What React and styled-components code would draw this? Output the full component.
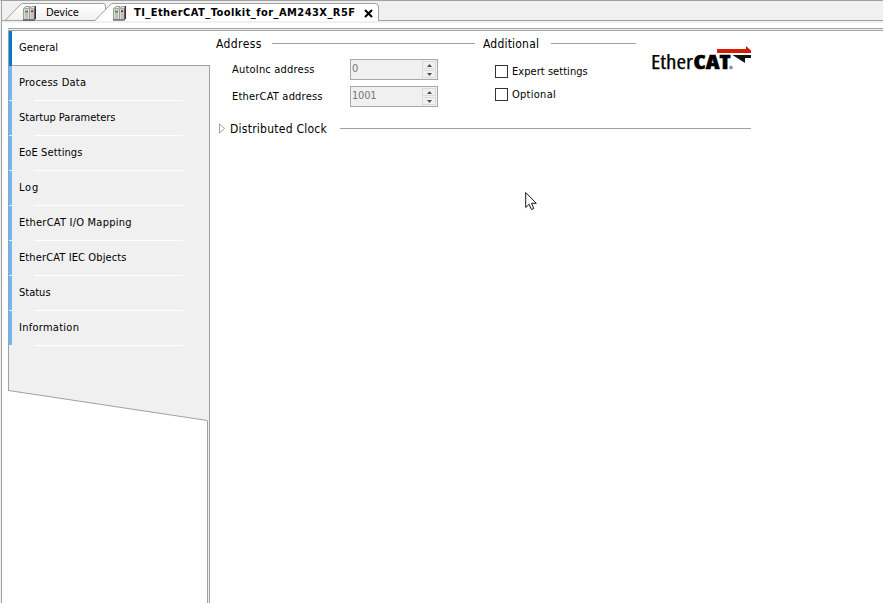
import React from "react";
import styled, { createGlobalStyle, css } from "styled-components";

const GlobalStyle = createGlobalStyle`
  *, *::before, *::after { box-sizing: border-box; }
  body {
    margin: 0;
    background: #fff;
    color: #000;
    font: 11px/14px "DejaVu Sans Condensed", "DejaVu Sans", sans-serif;
    font-stretch: condensed;
    overflow: hidden;
  }
`;

const Window = styled.div`
  width: 883px;
  height: 603px;
  display: flex;
  flex-direction: column;
  border-top: 1px solid #a0a0a0;
  border-left: 1px solid #f0f0f0;
  background: #fff;
`;

const TabBar = styled.header`
  height: 22px;
  display: flex;
  border-left: 1px solid #a0a0a0;
  background: linear-gradient(#f0f0f0 19px, #a0a0a0 19px, #a0a0a0 20px, #f0f0f0 20px);
`;

const Tab = styled.div`
  position: relative;
  width: ${(p) => p.$width}px;
  height: 22px;
  margin-left: ${(p) => p.$offset}px;
  padding: 4px 0 0 ${(p) => p.$pad}px;
  display: flex;
  align-items: flex-start;
  font-weight: ${(p) => (p.$active ? 700 : 400)};
`;

const TabShape = styled.svg`
  position: absolute;
  left: 0;
  top: 0;
`;

const DeviceIcon = styled.svg`
  position: relative;
  flex: none;
  width: 14px;
  height: 16px;
  margin-right: ${(p) => p.$gap}px;
`;

const Text = styled.span`
  position: relative;
  display: block;
  flex: none;
  white-space: nowrap;
  letter-spacing: ${(p) => p.$track || 0}px;
`;

const TabLabel = styled(Text)`
  margin-top: 1px;
`;

const CloseIcon = styled.svg`
  position: relative;
  flex: none;
  margin: 4px 0 0 9px;
`;

const Body = styled.div`
  flex: 1;
  min-height: 0;
  display: flex;
  padding: 5px 0 0 6px;
  border-left: 1px solid #a0a0a0;
`;

const Editor = styled.div`
  flex: 1;
  display: flex;
  border-top: 1px solid #a0a0a0;
`;

const Sidebar = styled.nav`
  position: relative;
  width: 202px;
  padding-top: 2px;
  display: flex;
  flex-direction: column;
`;

const SidebarShape = styled.svg`
  position: absolute;
  left: 0;
  top: 0;
`;

const NavItem = styled.div`
  position: relative;
  height: 35px;
  margin-left: 1px;
  padding: 10px 0 0 7px;
  border-left: 3px solid ${(p) => (p.$active ? "#0078d7" : "#6cb7ff")};
  ${(p) =>
    !p.$active &&
    css`
      background:
        linear-gradient(#fff, #fff) 22px 34px / 149px 1px no-repeat;
      &::after {
        content: "";
        position: absolute;
        left: -3px;
        bottom: 0;
        width: 3px;
        height: 1px;
        background: #f0f0f0;
      }
    `}
`;

const Content = styled.main`
  flex: 1;
  padding: 1px 0 0 6px;
  border-top: 1px solid #f0f0f0;
  box-shadow: inset 0 1px #a0a0a0;
`;

const TopRow = styled.div`
  display: flex;
  height: 84px;
`;

const Group = styled.section`
  width: ${(p) => p.$width}px;
  margin-right: ${(p) => p.$gap}px;
  display: flex;
  flex-direction: column;
`;

const Heading = styled.div`
  height: 15px;
  margin-top: 5px;
  margin-bottom: 1px;
  display: flex;
  align-items: center;
  font-size: 12px;
  line-height: 15px;
`;

const HeadingLabel = styled.div`
  width: ${(p) => p.$width}px;
  padding-top: 2px;
  flex: none;
`;

const Rule = styled.div`
  flex: 1;
  height: 1px;
  background: #a0a0a0;
`;

const Field = styled.label`
  height: 21px;
  margin-top: ${(p) => p.$top}px;
  padding-left: 16px;
  display: flex;
  align-items: center;
`;

const FieldName = styled.div`
  width: 118px;
`;

const Spinner = styled.div`
  width: 88px;
  height: 21px;
  padding: 1px;
  display: flex;
  justify-content: space-between;
  border: 1px solid #a8a8a8;
  background: #f0f0f0;
  color: #777;
  line-height: 16px;
`;

const SpinButtons = styled.div`
  width: 14px;
  display: flex;
  flex-direction: column;
  justify-content: space-between;
`;

const SpinButton = styled.div`
  height: 8px;
  display: flex;
  align-items: center;
  justify-content: center;
  border: 1px solid #dadada;
`;

const Check = styled.label`
  height: 13px;
  margin-top: ${(p) => p.$top}px;
  padding-left: 12px;
  display: flex;
  align-items: center;
  gap: 4px;
`;

const Box = styled.span`
  width: 13px;
  height: 13px;
  border: 1px solid #333;
  background: #fff;
`;

const Logo = styled.svg`
  margin-top: 8px;
  flex: none;
`;

const ClockRow = styled.div`
  display: flex;
  align-items: center;
  width: 535px;
  height: 16px;
  margin-top: 5px;
  font-size: 12px;
  line-height: 16px;
`;

const Expander = styled.svg`
  flex: none;
  margin: 1px 4px 0 2px;
`;

const Cursor = styled.svg`
  position: absolute;
  left: 525px;
  top: 191px;
`;

function Server({ gap }) {
  return (
    <DeviceIcon $gap={gap} viewBox="0 0 14 16">
      <path d="M.5 3.500 3 1.500h4L6 3.500z M6.500 3.500 9 1.500h3.500l-2 2z" fill="#e8e8e8" stroke="#999" />
      <path d="M0 3.500h5.500V15H0z M6 3.500h5V15H6z" fill="#c0c0c0" />
      <path d="M.5 4v10.500M6.500 4v10.500" stroke="#9a9a9a" />
      <path d="M1.500 4v10M7.500 4v10" stroke="#d8d8d8" />
      <path d="M11 3.500 13 1.500v12L11 15.500z" fill="#606060" />
      <path d="M0 15h11.500M12.500 1v13" stroke="#333" />
      <path d="M2 6h3v1.500H2z" fill="#10b010" />
      <path d="M8 5.500h2V7H8z" fill="#8c1720" />
    </DeviceIcon>
  );
}

function SpinField({ name, value, track, top, valueTrack }) {
  return (
    <Field $top={top}>
      <FieldName><Text $track={track}>{name}</Text></FieldName>
      <Spinner>
        <Text $track={valueTrack}>{value}</Text>
        <SpinButtons>
          <SpinButton><svg width="5" height="3"><path d="M0 3 2.500 0 5 3z" fill="#505050" /></svg></SpinButton>
          <SpinButton><svg width="5" height="3"><path d="M0 0h5L2.500 3z" fill="#505050" /></svg></SpinButton>
        </SpinButtons>
      </Spinner>
    </Field>
  );
}

const pages = [
  ["General", 0],
  ["Process Data", 0.25],
  ["Startup Parameters", 0],
  ["EoE Settings", 0.1],
  ["Log", 0.8],
  ["EtherCAT I/O Mapping", 0.22],
  ["EtherCAT IEC Objects", 0.12],
  ["Status", 0],
  ["Information", 0.27],
];

export default function App() {
  return (
    <>
      <GlobalStyle />
      <Window>
        <TabBar>
          <Tab $width={104} $offset={0} $pad={21}>
            <TabShape width="106" height="22">
              <defs>
                <linearGradient id="idleTab" x1="0" x2="0" y1="0" y2="1">
                  <stop offset="0" stopColor="#fff" />
                  <stop offset="1" stopColor="#f0f0f0" />
                </linearGradient>
              </defs>
              <path d="M3 19.500 L18 4 Q19.500 2.500 21 2.500 H101 Q103.500 2.500 103.500 5 V8 L93 19.500z" fill="url(#idleTab)" />
              <path d="M3 19.500 L18 4 Q19.500 2.500 21 2.500 H101 Q103.500 2.500 103.500 5 V9" fill="none" stroke="#a0a0a0" />
              <path d="M0 19.500h94" stroke="#a0a0a0" />
            </TabShape>
            <Server gap={9} />
            <TabLabel $track={-0.2}>Device</TabLabel>
          </Tab>
          <Tab $width={287} $offset={-14} $pad={21} $active>
            <TabShape width="288" height="22">
              <path d="M3 20 L18 4 Q19.500 2.500 21 2.500 H283 Q286.500 2.500 286.500 6 V20z" fill="#fff" />
              <path d="M3 19.500 L18 4 Q19.500 2.500 21 2.500 H283 Q286.500 2.500 286.500 6 V20" fill="none" stroke="#a0a0a0" />
            </TabShape>
            <Server gap={7} />
            <TabLabel $track={0.45}>TI_EtherCAT_Toolkit_for_AM243X_R5F</TabLabel>
            <CloseIcon width="9" height="9" viewBox="0 0 9 9">
              <path d="M1 1l7 7M8 1 1 8" stroke="#000" strokeWidth="2" />
            </CloseIcon>
          </Tab>
        </TabBar>
        <Body>
          <Editor>
            <Sidebar>
              <SidebarShape width="202" height="575">
                <path d="M0 0h202v1H0z" fill="#f0f0f0" />
                <path d="M0 36H201V575H199V391L0 361.500z" fill="#f0f0f0" />
                <path d="M0 1.500h202M0 36.500h202M.5 1v361M201.500 36v539M199.500 392v183" stroke="#a0a0a0" fill="none" />
                <path d="M.5 361.500 199.500 391.500" stroke="#a0a0a0" />
              </SidebarShape>
              {pages.map(([name, track], i) => (
                <NavItem key={name} $active={i === 0}><Text $track={track}>{name}</Text></NavItem>
              ))}
            </Sidebar>
            <Content>
              <TopRow>
                <Group $width={259} $gap={8}>
                  <Heading>
                    <HeadingLabel $width={56}><Text $track={0.4}>Address</Text></HeadingLabel>
                    <Rule />
                  </Heading>
                  <SpinField top={7} name="AutoInc address" value="0" track={0.2} />
                  <SpinField top={6} name="EtherCAT address" value="1001" track={0.2} valueTrack={-0.2} />
                </Group>
                <Group $width={153} $gap={15}>
                  <Heading>
                    <HeadingLabel $width={68}><Text $track={0.2}>Additional</Text></HeadingLabel>
                    <Rule />
                  </Heading>
                  <Check $top={13}><Box /><Text $track={0.05}>Expert settings</Text></Check>
                  <Check $top={10}><Box /><Text $track={0.27}>Optional</Text></Check>
                </Group>
                <Logo width="102" height="40" viewBox="0 0 102 40">
                  <text x="0" y="30" fontFamily="Open Sans" fontSize="19.500" stroke="#000" strokeWidth=".25" textLength="42" lengthAdjust="spacingAndGlyphs">Ether</text>
                  <text x="42.500" y="30" fontFamily="Open Sans" fontSize="19.500" fontWeight="800" stroke="#000" strokeWidth=".5" textLength="37" lengthAdjust="spacingAndGlyphs">CAT</text>
                  <path d="M66 10h29V7l5 4.500V14H66z" fill="#d61b00" />
                  <path d="M81.500 16H100v3h-6v5z" fill="#111" />
                  <circle cx="80" cy="28.500" r="1.500" fill="#999" stroke="#666" strokeWidth=".5" />
                </Logo>
              </TopRow>
              <ClockRow>
                <Expander width="8" height="11"><path d="M1.500 1 6.500 5.500 1.500 10z" fill="#fff" stroke="#a0a0a0" /></Expander>
                <HeadingLabel $width={110}><Text $track={0.25}>Distributed Clock</Text></HeadingLabel>
                <Rule />
              </ClockRow>
            </Content>
          </Editor>
        </Body>
        <Cursor width="13" height="20">
          <path d="M.7 1.500v15l3.400-3.200 2.400 5.200 2.300-1-2.200-5.200h4.700z" fill="#fff" stroke="#15151f" />
        </Cursor>
      </Window>
    </>
  );
}
